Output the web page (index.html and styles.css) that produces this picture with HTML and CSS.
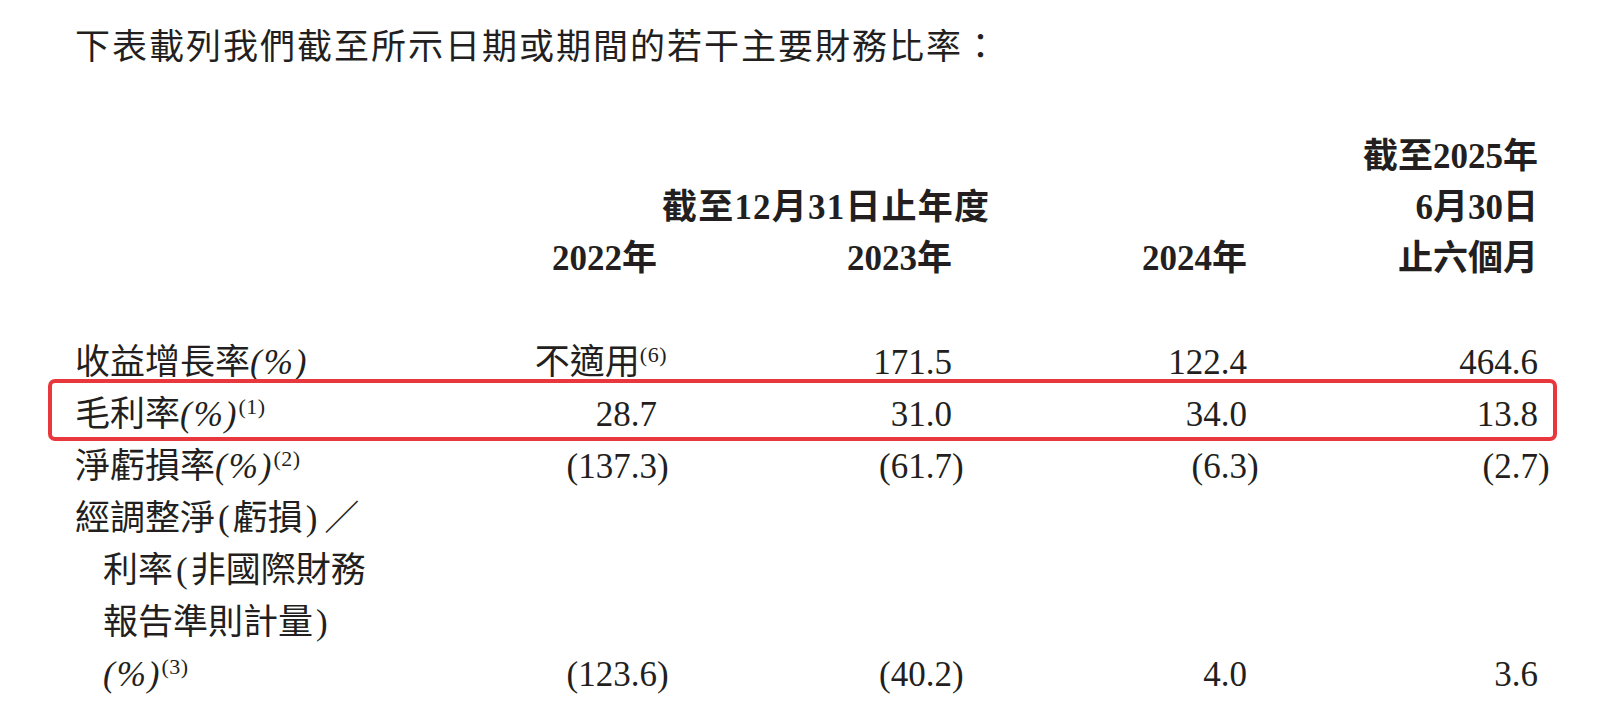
FILE: index.html
```html
<!DOCTYPE html>
<html lang="zh-Hant">
<head>
<meta charset="utf-8">
<title>主要財務比率</title>
<link rel="stylesheet" href="styles.css">
</head>
<body>
<main class="page">
  <p class="intro">下表載列我們截至所示日期或期間的若干主要財務比率：</p>
  <section class="table">
    <div class="thead">
      <div class="hrow"><span class="c4">截至2025年</span></div>
      <div class="hrow"><span class="span">截至12月31日止年度</span><span class="c4">6月30日</span></div>
      <div class="hrow"><span class="c1">2022年</span><span class="c2">2023年</span><span class="c3">2024年</span><span class="c4">止六個月</span></div>
    </div>
    <div class="tbody">
      <div class="row">
        <div class="label">收益增長率<i>(%)</i></div>
        <div class="c1 hang-sup">不適用<sup>(6)</sup></div>
        <div class="c2">171.5</div>
        <div class="c3">122.4</div>
        <div class="c4">464.6</div>
      </div>
      <div class="row highlight">
        <div class="label">毛利率<i>(%)</i><sup>(1)</sup></div>
        <div class="c1">28.7</div>
        <div class="c2">31.0</div>
        <div class="c3">34.0</div>
        <div class="c4">13.8</div>
      </div>
      <div class="row">
        <div class="label">淨虧損率<i>(%)</i><sup>(2)</sup></div>
        <div class="c1 neg">(137.3)</div>
        <div class="c2 neg">(61.7)</div>
        <div class="c3 neg">(6.3)</div>
        <div class="c4 neg">(2.7)</div>
      </div>
      <div class="row multi">
        <div class="label">
          <div class="line">經調整淨<span class="p">(</span>虧損<span class="p">)</span><span class="slash">／</span></div>
          <div class="line indent">利率<span class="p">(</span>非國際財務</div>
          <div class="line indent">報告準則計量<span class="p">)</span></div>
          <div class="line indent"><i>(%)</i><sup>(3)</sup></div>
        </div>
        <div class="c1 neg">(123.6)</div>
        <div class="c2 neg">(40.2)</div>
        <div class="c3">4.0</div>
        <div class="c4">3.6</div>
      </div>
    </div>
  </section>
</main>
</body>
</html>
```

FILE: styles.css
```css
html, body {
  margin: 0;
  padding: 0;
  background: #ffffff;
}

body {
  width: 1610px;
  height: 716px;
  overflow: hidden;
  color: #231f20;
  font-family: "Liberation Serif", "Noto Sans CJK TC", serif;
  font-size: 35px;
}

.page {
  padding: 22px 0 0 75px;
}

.intro {
  margin: 0;
  height: 52px;
  line-height: 52px;
  letter-spacing: 2px;
  white-space: nowrap;
}

.table {
  width: 1463px;
  margin-top: 57px;
}

.hrow,
.row {
  display: grid;
  grid-template-columns: 382px 200px 295px 295px 291px;
  white-space: nowrap;
}

.hrow {
  height: 51px;
  line-height: 51px;
  font-weight: bold;
}

.thead {
  margin-bottom: 53px;
}

.row {
  height: 52px;
  line-height: 52px;
}

.row.multi {
  height: 208px;
}

.c1, .c2, .c3, .c4 {
  text-align: right;
}

.c1 { grid-column: 2; }
.c2 { grid-column: 3; }
.c3 { grid-column: 4; }
.c4 { grid-column: 5; }

.span {
  grid-column: 2 / 5;
  padding-left: 205px;
  letter-spacing: 1.2px;
}

.label {
  grid-column: 1;
}

.line {
  height: 52px;
}

.indent {
  padding-left: 28px;
}

.p {
  margin: 0 3px;
}

.slash {
  margin-left: 4px;
}

.multi > .c1,
.multi > .c2,
.multi > .c3,
.multi > .c4 {
  align-self: end;
  height: 52px;
}

.neg {
  margin-right: -0.333em;
}

.hang-sup {
  margin-right: -10px;
}

i {
  font-style: italic;
  letter-spacing: 2px;
}

sup {
  font-size: 22px;
  line-height: 0;
  vertical-align: 12px;
  letter-spacing: 0.5px;
}

.highlight {
  position: relative;
}

.highlight::before {
  content: "";
  position: absolute;
  left: -27px;
  right: -19px;
  top: -10px;
  bottom: 0;
  border: 4px solid #e8383d;
  border-radius: 7px;
  pointer-events: none;
}
```
